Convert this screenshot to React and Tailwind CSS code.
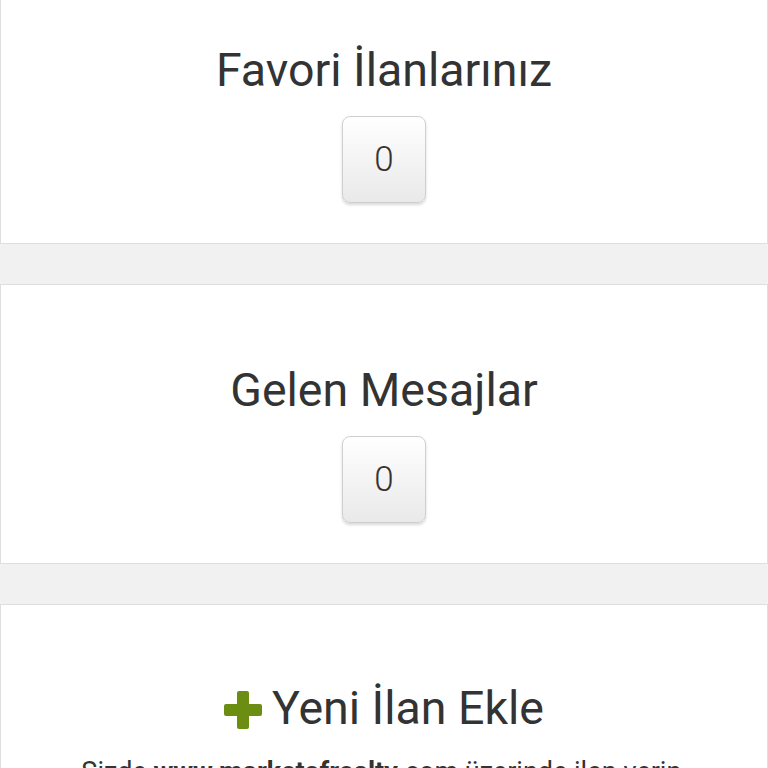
const CountButton = ({ value }) => (
    <button
        type="button"
        className="w-[84px] h-[87px] rounded-lg border border-[#cfcfcf] bg-gradient-to-b from-white to-[#e9e9e9] shadow-[0_2px_3px_rgba(0,0,0,0.15)] text-[35px] font-light text-[#333] leading-none flex items-center justify-center"
    >
        {value}
    </button>
);

const Card = ({ children }) => (
    <div className="h-[280px] bg-white border border-[#dedede] flex flex-col items-center pt-[79px]">
        {children}
    </div>
);

const Gap = () => <div className="h-[40px] bg-[#f1f1f1]" />;

export default function App() {
    return (
        <div className="h-[768px] overflow-hidden bg-[#f1f1f1] font-['Roboto',sans-serif] text-[#333]">
            <div className="-mt-[36px]">
                <Card>
                    <h2 className="text-[46.5px] leading-[52px]">Favori İlanlarınız</h2>
                    <div className="mt-[20px]">
                        <CountButton value="0" />
                    </div>
                </Card>
                <Gap />
                <Card>
                    <h2 className="text-[46.5px] leading-[52px]">Gelen Mesajlar</h2>
                    <div className="mt-[20px]">
                        <CountButton value="0" />
                    </div>
                </Card>
                <Gap />
                <div className="bg-white border border-[#dedede] flex flex-col items-center pt-[77px] pb-10">
                    <h2 className="text-[46.5px] leading-[52px] flex items-center gap-[10px]">
                        <svg width="38" height="38" viewBox="0 0 38 38" className="mt-[4px]">
                            <rect x="13" y="0" width="12" height="38" rx="2" fill="#6b8e12" />
                            <rect x="0" y="13" width="38" height="12" rx="2" fill="#6b8e12" />
                        </svg>
                        Yeni İlan Ekle
                    </h2>
                    <p className="mt-[20px] px-12 text-center text-[27px] leading-[36px]">
                        Sizde <b className="font-bold">www.marketofrealty</b>.com üzerinde ilan verin, binlerce kişiye ulaşın.
                    </p>
                </div>
            </div>
        </div>
    );
}
